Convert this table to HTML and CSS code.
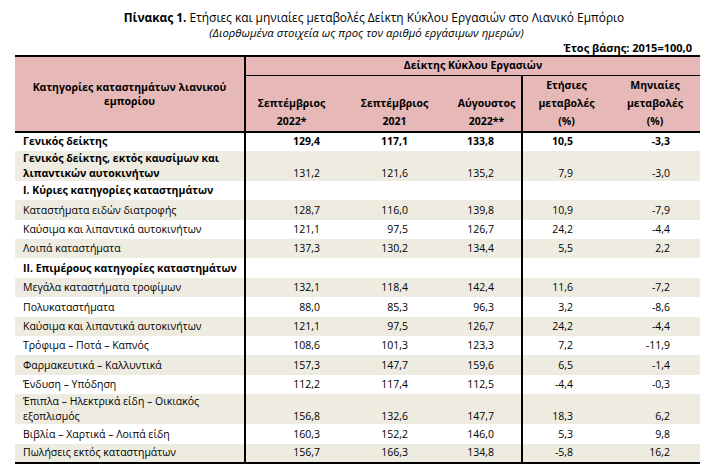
FILE: index.html
```html
<!DOCTYPE html>
<html lang="el">
<head>
    <meta charset="UTF-8">
    <title>Πίνακας 1</title>
    <link rel="stylesheet" href="styles.css">
</head>
<body>
    <div class="sheet">
        <div class="title"><b>Πίνακας 1.</b> Ετήσιες και μηνιαίες μεταβολές Δείκτη Κύκλου Εργασιών στο Λιανικό Εμπόριο</div>
        <div class="subtitle">(Διορθωμένα στοιχεία ως προς τον αριθμό εργάσιμων ημερών)</div>
        <div class="base">Έτος βάσης: 2015=100,0</div>

        <table class="data">
            <colgroup>
                <col class="c-label">
                <col class="c-n1">
                <col class="c-n2">
                <col class="c-n3">
                <col class="c-p1">
                <col class="c-p2">
            </colgroup>
            <thead>
                <tr class="h1">
                    <th rowspan="2" class="label-head">Κατηγορίες καταστημάτων λιανικού<br>εμπορίου</th>
                    <th colspan="5" class="group">Δείκτης Κύκλου Εργασιών</th>
                </tr>
                <tr class="h2">
                    <th>Σεπτέμβριος<br>2022*</th>
                    <th>Σεπτέμβριος<br>2021</th>
                    <th>Αύγουστος<br>2022**</th>
                    <th class="split">Ετήσιες<br>μεταβολές<br>(%)</th>
                    <th>Μηνιαίες<br>μεταβολές<br>(%)</th>
                </tr>
            </thead>
            <tbody>
                <tr class="bold">
                    <td>Γενικός δείκτης</td>
                    <td class="n1">129,4</td><td class="n2">117,1</td><td class="n3">133,8</td>
                    <td class="p1 split">10,5</td><td class="p2">-3,3</td>
                </tr>
                <tr class="alt tall">
                    <td class="strong">Γενικός δείκτης, εκτός καυσίμων και<br>λιπαντικών αυτοκινήτων</td>
                    <td class="n1">131,2</td><td class="n2">121,6</td><td class="n3">135,2</td>
                    <td class="p1 split">7,9</td><td class="p2">-3,0</td>
                </tr>
                <tr>
                    <td class="strong">I. Κύριες κατηγορίες καταστημάτων</td>
                    <td></td><td></td><td></td><td class="split"></td><td></td>
                </tr>
                <tr class="alt">
                    <td>Καταστήματα ειδών διατροφής</td>
                    <td class="n1">128,7</td><td class="n2">116,0</td><td class="n3">139,8</td>
                    <td class="p1 split">10,9</td><td class="p2">-7,9</td>
                </tr>
                <tr>
                    <td>Καύσιμα και λιπαντικά αυτοκινήτων</td>
                    <td class="n1">121,1</td><td class="n2">97,5</td><td class="n3">126,7</td>
                    <td class="p1 split">24,2</td><td class="p2">-4,4</td>
                </tr>
                <tr class="alt">
                    <td>Λοιπά καταστήματα</td>
                    <td class="n1">137,3</td><td class="n2">130,2</td><td class="n3">134,4</td>
                    <td class="p1 split">5,5</td><td class="p2">2,2</td>
                </tr>
                <tr>
                    <td class="strong">II. Επιμέρους κατηγορίες καταστημάτων</td>
                    <td></td><td></td><td></td><td class="split"></td><td></td>
                </tr>
                <tr class="alt">
                    <td>Μεγάλα καταστήματα τροφίμων</td>
                    <td class="n1">132,1</td><td class="n2">118,4</td><td class="n3">142,4</td>
                    <td class="p1 split">11,6</td><td class="p2">-7,2</td>
                </tr>
                <tr>
                    <td>Πολυκαταστήματα</td>
                    <td class="n1">88,0</td><td class="n2">85,3</td><td class="n3">96,3</td>
                    <td class="p1 split">3,2</td><td class="p2">-8,6</td>
                </tr>
                <tr class="alt">
                    <td>Καύσιμα και λιπαντικά αυτοκινήτων</td>
                    <td class="n1">121,1</td><td class="n2">97,5</td><td class="n3">126,7</td>
                    <td class="p1 split">24,2</td><td class="p2">-4,4</td>
                </tr>
                <tr>
                    <td>Τρόφιμα – Ποτά – Καπνός</td>
                    <td class="n1">108,6</td><td class="n2">101,3</td><td class="n3">123,3</td>
                    <td class="p1 split">7,2</td><td class="p2">-11,9</td>
                </tr>
                <tr class="alt">
                    <td>Φαρμακευτικά – Καλλυντικά</td>
                    <td class="n1">157,3</td><td class="n2">147,7</td><td class="n3">159,6</td>
                    <td class="p1 split">6,5</td><td class="p2">-1,4</td>
                </tr>
                <tr>
                    <td>Ένδυση – Υπόδηση</td>
                    <td class="n1">112,2</td><td class="n2">117,4</td><td class="n3">112,5</td>
                    <td class="p1 split">-4,4</td><td class="p2">-0,3</td>
                </tr>
                <tr class="alt tall">
                    <td>Έπιπλα – Ηλεκτρικά είδη – Οικιακός<br>εξοπλισμός</td>
                    <td class="n1">156,8</td><td class="n2">132,6</td><td class="n3">147,7</td>
                    <td class="p1 split">18,3</td><td class="p2">6,2</td>
                </tr>
                <tr>
                    <td>Βιβλία – Χαρτικά – Λοιπά είδη</td>
                    <td class="n1">160,3</td><td class="n2">152,2</td><td class="n3">146,0</td>
                    <td class="p1 split">5,3</td><td class="p2">9,8</td>
                </tr>
                <tr class="alt">
                    <td>Πωλήσεις εκτός καταστημάτων</td>
                    <td class="n1">156,7</td><td class="n2">166,3</td><td class="n3">134,8</td>
                    <td class="p1 split">-5,8</td><td class="p2">16,2</td>
                </tr>
            </tbody>
        </table>
    </div>
</body>
</html>
```

FILE: styles.css
```css
body {
    margin: 0;
    background-color: #fff;
    color: #000;
    font-family: "Open Sans", "Noto Sans", sans-serif;
    font-size: 10.5px;
}

.sheet {
    width: 685px;
    margin-left: 15px;
    padding-top: 10px;
}

.title {
    text-align: center;
    font-size: 11.9px;
    line-height: 15px;
    padding-left: 33px;
}

.subtitle {
    text-align: center;
    font-style: italic;
    font-size: 11.4px;
    line-height: 15px;
    padding-left: 18px;
}

.base {
    text-align: right;
    font-weight: bold;
    font-size: 11px;
    line-height: 15px;
    padding-right: 8px;
}

.data {
    width: 685px;
    border-collapse: collapse;
    table-layout: fixed;
    border-top: 2px solid #000;
    border-bottom: 2px solid #000;
}

.c-label { width: 230px; }
.c-n1 { width: 92px; }
.c-n2 { width: 115px; }
.c-n3 { width: 70px; }
.c-p1 { width: 88px; }
.c-p2 { width: 90px; }

thead th {
    background-color: #e6b8b7;
    font-weight: bold;
    text-align: center;
    padding: 0;
}

.h1 { height: 19px; }

.h1 .group {
    border-bottom: 1px solid #000;
    line-height: 15px;
}

.label-head {
    border-right: 2px solid #000;
    border-bottom: 2px solid #000;
    line-height: 14px;
    vertical-align: middle;
}

.h2 th {
    height: 52px;
    line-height: 18px;
    vertical-align: bottom;
    border-bottom: 2px solid #000;
    padding-bottom: 1px;
}

tbody tr {
    height: 19.4px;
}

tbody tr.tall {
    height: 29.6px;
}

tbody td {
    padding: 0 0 2px 0;
    line-height: 15px;
    vertical-align: bottom;
    white-space: nowrap;
}

tbody tr.tall td {
    padding-bottom: 0;
}

tbody td:first-child {
    padding-left: 8px;
    border-right: 2px solid #000;
}

tr.alt td {
    background-color: #eeece1;
}

tr.bold td,
td.strong {
    font-weight: bold;
}

.split {
    border-left: 2px solid #000;
}

.n1, .n2, .n3, .p1, .p2 {
    text-align: right;
}

.n1 { padding-right: 17px !important; }
.n2 { padding-right: 44px !important; }
.n3 { padding-right: 27px !important; }
.p1 { padding-right: 37px !important; }
.p2 { padding-right: 30px !important; }
```
